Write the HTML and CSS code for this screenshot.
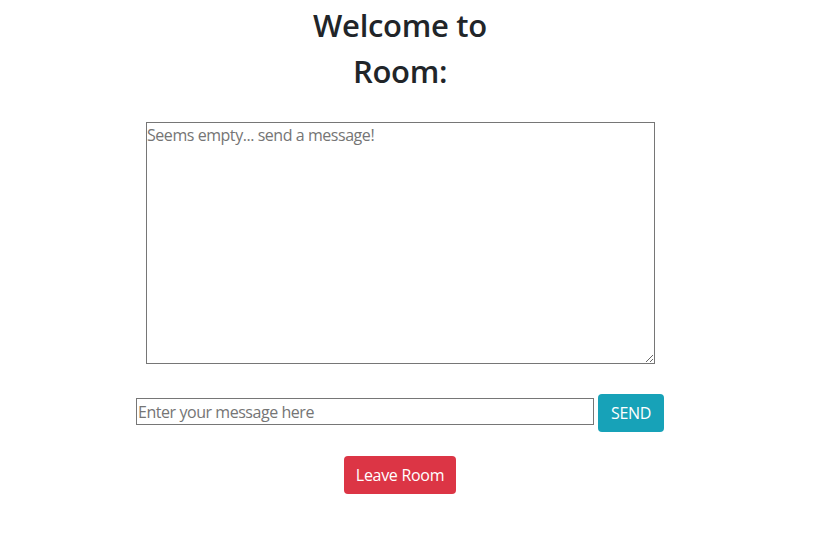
FILE: index.html
```html
<!DOCTYPE html>
<html>
<head>
<meta charset="utf-8">
<link rel="stylesheet" href="styles.css">
</head>
<body>
<main class="room">
  <h1 class="room-title">Welcome to Room:</h1>
  <textarea class="chat-log" placeholder="Seems empty... send a message!" readonly></textarea>
  <form class="composer">
    <input class="composer-input" type="text" placeholder="Enter your message here">
    <button class="btn btn-info" type="button">SEND</button>
  </form>
  <button class="btn btn-danger" type="button">Leave Room</button>
</main>
</body>
</html>
```
FILE: styles.css
```css
* { box-sizing: border-box; }
body {
  margin: 0;
  font-family: "Open Sans", "Noto Sans", sans-serif;
  color: #212529;
  background: #fff;
}
.room {
  display: flex;
  flex-direction: column;
  align-items: center;
  padding-right: 20px;
}
.room-title {
  width: 200px;
  margin: 2px 0 0;
  font-size: 31px;
  line-height: 46px;
  font-weight: 600;
  letter-spacing: -0.3px;
  text-align: center;
}
.chat-log {
  width: 509px;
  height: 242px;
  margin: 28px 0 0 1px;
  padding: 0;
  border: 1px solid #767676;
  font-family: inherit;
  font-size: 16px;
  line-height: 24px;
  letter-spacing: -0.45px;
  resize: vertical;
}
.chat-log::placeholder, .composer-input::placeholder { color: #757575; }
.composer {
  display: flex;
  align-items: flex-start;
  gap: 4px;
  margin-top: 30px;
}
.composer-input {
  width: 458px;
  height: 27px;
  margin-top: 4px;
  padding: 1px 1px;
  border: 1px solid #767676;
  font-family: inherit;
  font-size: 16px;
  letter-spacing: -0.45px;
}
.btn {
  height: 38px;
  padding: 0;
  border: none;
  border-radius: 4px;
  color: #fff;
  font-family: inherit;
  font-size: 16px;
  letter-spacing: -0.3px;
  white-space: nowrap;
  cursor: pointer;
}
.btn-info { background: #17a2b8; width: 66px; }
.btn-danger { background: #dc3545; width: 112px; margin-top: 24px; }
```
